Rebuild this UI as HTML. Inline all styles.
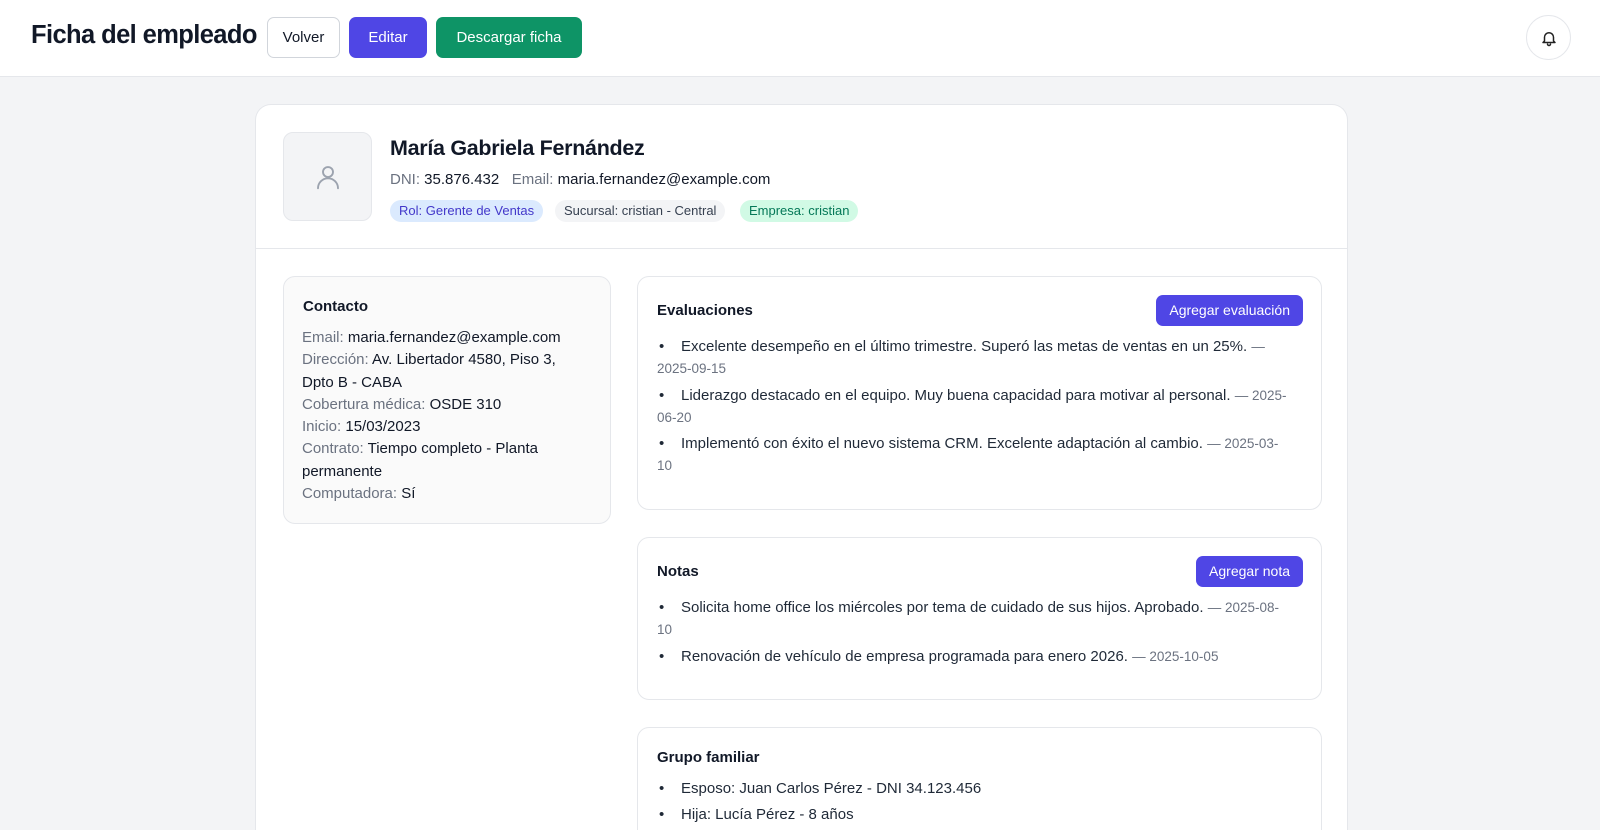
<!DOCTYPE html>
<html><head><meta charset="utf-8"><style>
*{box-sizing:border-box;margin:0;padding:0}
html,body{width:1600px;height:830px;overflow:hidden}
body{background:#f3f4f6;font-family:"Liberation Sans",sans-serif;color:#1f2937;position:relative}
.hdr{position:absolute;left:0;top:0;width:1600px;height:77px;background:#fff;border-bottom:1px solid #e5e7eb}
.title{position:absolute;left:31px;top:21px;font-size:25.5px;font-weight:bold;color:#111827;letter-spacing:-0.6px}
.btn{position:absolute;top:17px;height:41px;border-radius:7px;font-size:15px;display:flex;align-items:center;justify-content:center}
.bell{position:absolute;left:1526px;top:15px;width:45px;height:45px;border:1px solid #e5e7eb;border-radius:50%;display:flex;align-items:center;justify-content:center}
.card{position:absolute;left:255px;top:104px;width:1093px;height:726px;overflow:hidden;background:#fff;border:1px solid #e5e7eb;border-bottom:none;border-radius:16px 16px 0 0}
.av{position:absolute;left:27px;top:27px;width:89px;height:89px;background:#f3f4f6;border:1px solid #e5e7eb;border-radius:10px;display:flex;align-items:center;justify-content:center}
.name{position:absolute;left:134px;top:31px;font-size:21.5px;font-weight:bold;color:#111827;letter-spacing:-0.3px}
.meta{position:absolute;left:134px;top:66px;font-size:15px;color:#111827}
.lbl{color:#6b7280}
.tag{position:absolute;top:95px;height:22px;border-radius:11px;font-size:13px;padding:0 9px;line-height:22px}
.div{position:absolute;left:0;right:0;top:143px;border-top:1px solid #e5e7eb}
.box{position:absolute;border:1px solid #e5e7eb;border-radius:12px;background:#fff}
.box h3{position:absolute;left:19px;font-size:15px;font-weight:bold;color:#111827}
.contact{left:27px;top:171px;width:328px;height:248px;background:#fafafa}
.contact .t{position:absolute;left:18px;top:50px;width:272px;font-size:15px;line-height:22.3px;color:#111827}
ul{position:absolute;left:19px;right:30px;list-style:none;font-size:15px;line-height:22.3px;color:#1f2937}
li{margin-bottom:4px;padding-left:0}
li:before{content:"•";display:inline-block;width:22px;padding-left:2px}
.d{color:#6b7280;font-size:13.5px}
.ab{position:absolute;right:18px;height:31px;background:#4f46e5;color:#fff;border-radius:7px;font-size:14px;line-height:31px;padding:0 13px}
</style></head><body>
<div class="hdr">
<div class="title">Ficha del empleado</div>
<div class="btn" style="left:267px;width:73px;border:1px solid #d1d5db;background:#fff;color:#111827">Volver</div>
<div class="btn" style="left:349px;width:78px;background:#4f46e5;color:#fff">Editar</div>
<div class="btn" style="left:436px;width:146px;background:#0e9466;color:#fff">Descargar ficha</div>
<div class="bell"><svg width="18" height="18" viewBox="0 0 24 24" fill="none" stroke="#222" stroke-width="2" stroke-linecap="round" stroke-linejoin="round"><path d="M6 16V11a6 6 0 0 1 12 0v5l2 2H4z"/><path d="M10 20a2 2 0 0 0 4 0"/></svg></div>
</div>
<div class="card">
<div class="av"><svg width="30" height="30" viewBox="0 0 24 24" fill="none" stroke="#9ca3af" stroke-width="1.5" stroke-linecap="round"><circle cx="12" cy="8" r="4"/><path d="M4 21a8 8 0 0 1 16 0"/></svg></div>
<div class="name">María Gabriela Fernández</div>
<div class="meta"><span class="lbl">DNI:</span> 35.876.432 &nbsp; <span class="lbl">Email:</span> maria.fernandez@example.com</div>
<div class="tag" style="left:134px;background:#dbeafe;color:#4338ca">Rol: Gerente de Ventas</div>
<div class="tag" style="left:299px;background:#f3f4f6;color:#374151">Sucursal: cristian - Central</div>
<div class="tag" style="left:484px;background:#d1fae5;color:#047857">Empresa: cristian</div>
<div class="div"></div>
<div class="box contact"><h3 style="top:21px">Contacto</h3>
<div class="t"><span class="lbl">Email:</span> maria.fernandez@example.com<br><span class="lbl">Dirección:</span> Av. Libertador 4580, Piso 3, Dpto B - CABA<br><span class="lbl">Cobertura médica:</span> OSDE 310<br><span class="lbl">Inicio:</span> 15/03/2023<br><span class="lbl">Contrato:</span> Tiempo completo - Planta permanente<br><span class="lbl">Computadora:</span> Sí</div></div>
<div class="box" style="left:381px;top:171px;width:685px;height:234px"><h3 style="top:25px">Evaluaciones</h3><div class="ab" style="top:18px">Agregar evaluación</div>
<ul style="top:59px"><li>Excelente desempeño en el último trimestre. Superó las metas de ventas en un 25%. <span class="d">— 2025-09-15</span></li><li>Liderazgo destacado en el equipo. Muy buena capacidad para motivar al personal. <span class="d">— 2025-06-20</span></li><li>Implementó con éxito el nuevo sistema CRM. Excelente adaptación al cambio. <span class="d">— 2025-03-10</span></li></ul></div>
<div class="box" style="left:381px;top:432px;width:685px;height:163px"><h3 style="top:25px">Notas</h3><div class="ab" style="top:18px">Agregar nota</div>
<ul style="top:59px"><li>Solicita home office los miércoles por tema de cuidado de sus hijos. Aprobado. <span class="d">— 2025-08-10</span></li><li>Renovación de vehículo de empresa programada para enero 2026. <span class="d">— 2025-10-05</span></li></ul></div>
<div class="box" style="left:381px;top:622px;width:685px;height:200px"><h3 style="top:21px">Grupo familiar</h3>
<ul style="top:50px"><li>Esposo: Juan Carlos Pérez - DNI 34.123.456</li><li>Hija: Lucía Pérez - 8 años</li></ul></div>
</div>
</body></html>
